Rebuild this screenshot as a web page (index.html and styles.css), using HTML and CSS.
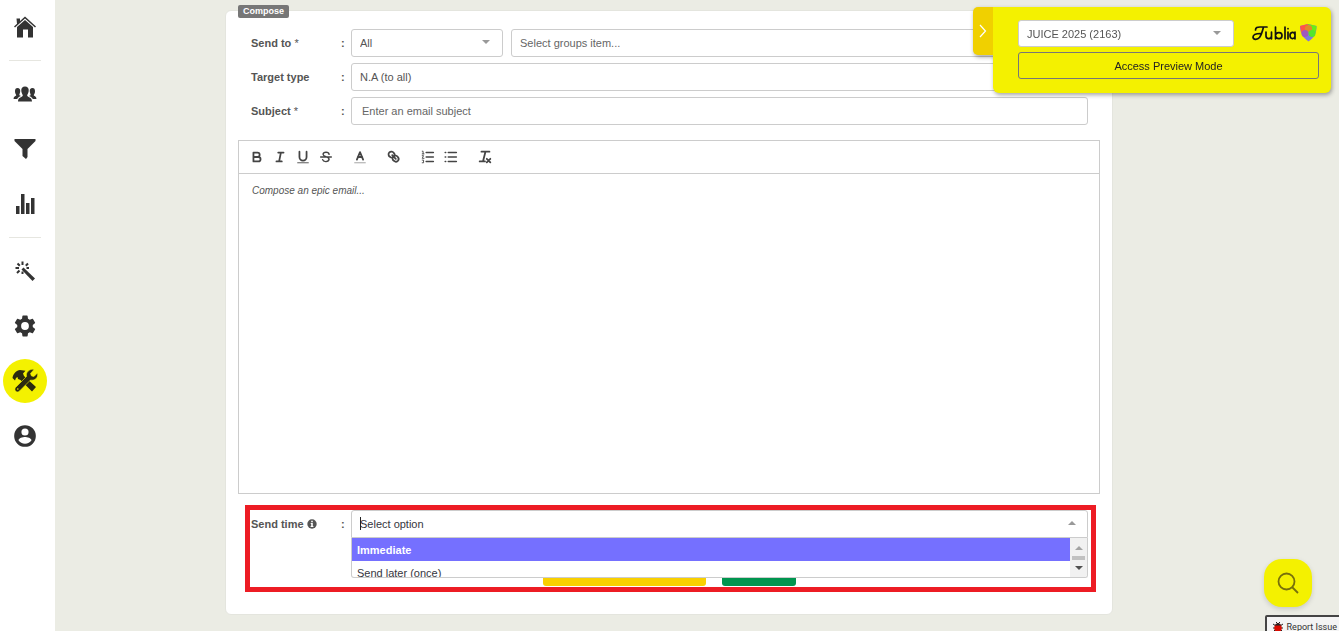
FILE: index.html
```html
<!DOCTYPE html>
<html lang="en">
<head>
<meta charset="utf-8">
<title>Compose email</title>
<link rel="stylesheet" href="styles.css">
</head>
<body>
<div class="app">
  <nav class="sidebar" aria-label="Main">
    <a class="nav-item" href="#home" aria-label="Home">
      <svg width="22" height="22" viewBox="0 0 22 22"><path d="M2.500 2.500H6V5L3 8ZM0 10.500 11 0.500 22 10.500 21 11.500 11 2.600 1 11.500Z"/><path d="M11 4 19 11V21.500H14V13.500H9V21.500H3V11Z"/></svg>
    </a>
    <hr class="nav-rule">
    <a class="nav-item" href="#people" aria-label="People">
      <svg width="24" height="16" viewBox="0 0 24 16"><path d="M4.500 2C6.500 2 7.500 3.400 7.200 5.600 7 7.500 6.200 8.200 6.400 9.200L8 10.100C6 11 5 11.500 4.200 13H0.600C0.600 11 1.200 10.600 3.200 9.500 3.400 8.500 2 7.500 2 5.400 1.900 3.200 2.900 2 4.500 2ZM19.500 2C17.500 2 16.500 3.400 16.800 5.600 17 7.500 17.800 8.200 17.600 9.200L16 10.100C18 11 19 11.500 19.800 13H23.400C23.400 11 22.800 10.600 20.800 9.500 20.600 8.500 22 7.500 22 5.400 22.100 3.200 21.100 2 19.500 2Z"/><path d="M12 .5C14.500 .5 16 2 15.700 5 15.500 7.200 14.200 8.500 14.200 9.600 14.200 11.500 19 11 19 15.500H5C5 11 9.800 11.500 9.800 9.600 9.800 8.500 8.500 7.200 8.300 5 8 2 9.500 .5 12 .5Z"/></svg>
    </a>
    <a class="nav-item" href="#filter" aria-label="Filter">
      <svg width="22" height="20" viewBox="0 0 22 20"><path d="M.5 0H21.500V2L13.500 10V18L12 20 8.500 17V10L.5 2Z"/></svg>
    </a>
    <a class="nav-item" href="#reports" aria-label="Reports">
      <svg width="20" height="20" viewBox="0 0 20 20"><path d="M1 12H4.500V20H1ZM6 0H9.500V20H6ZM11 9H14.500V20H11ZM16 4H19.500V20H16Z"/></svg>
    </a>
    <hr class="nav-rule">
    <a class="nav-item" href="#wizard" aria-label="Wizard">
      <svg width="20" height="20" viewBox="0 0 20 20"><path d="M8.500 6.500 20 17.500 17.500 20 6.500 8.500Z"/><path d="M7.500 .5V4M13 2.500 10.800 4.800M2.500 2.500 4.800 4.800M.5 7H4M2 12 4.500 9.500M7.500 10.500V13M11.500 7H14" fill="none" stroke="#333" stroke-width="2"/></svg>
    </a>
    <a class="nav-item" href="#settings" aria-label="Settings">
      <svg width="26" height="26" viewBox="0 0 24 24"><path d="M19.140 12.940c.04-.3.060-.610.060-.940s-.020-.640-.070-.940l2.030-1.580a.5.5 0 0 0 .12-.610l-1.920-3.320a.49.49 0 0 0-.59-.220l-2.390.96a7 7 0 0 0-1.620-.940l-.360-2.540a.48.48 0 0 0-.480-.410h-3.840a.47.47 0 0 0-.470.410l-.360 2.540c-.59.240-1.130.57-1.620.940l-2.390-.96a.48.48 0 0 0-.59.220L2.740 8.870a.47.47 0 0 0 .12.610l2.030 1.580a6 6 0 0 0 0 1.880l-2.030 1.580a.5.5 0 0 0-.12.610l1.920 3.320c.12.220.37.290.59.220l2.390-.96c.5.380 1.030.7 1.620.940l.36 2.540c.05.240.240.410.480.410h3.840c.240 0 .440-.170.470-.410l.360-2.540a7 7 0 0 0 1.620-.940l2.390.96c.220.080.470 0 .59-.220l1.920-3.320a.47.47 0 0 0-.12-.610ZM12 15.600a3.600 3.600 0 1 1 0-7.200 3.600 3.600 0 0 1 0 7.200Z"/></svg>
    </a>
    <a class="nav-item nav-item-active" href="#tools" aria-label="Tools">
      <svg width="26" height="24" viewBox="0 0 26 24"><path d="M.5 9C1 5 4.500 1 8 1L13.500 1.800 11 4.500 12 7 24 18 20 22.500 8.500 11 6 10 5.500 8 4 9 3 11.500Z"/><path d="M22 .5 18.500 4.500 19.500 7 22 7.500 25.500 4C26.500 9 22.500 12 18.500 11L7.500 22C5 24.500 1.500 21.500 3.500 18.500L14.500 7.500C13.500 3 18 -.5 22 .5Z" stroke="#f4f100" stroke-width=".6"/><circle cx="5.800" cy="20" r=".8" fill="#f4f100"/></svg>
    </a>
    <a class="nav-item" href="#account" aria-label="Account">
      <svg width="26" height="26" viewBox="0 0 24 24"><path d="M12 2a10 10 0 1 0 0 20 10 10 0 0 0 0-20Zm0 3a3.300 3.300 0 1 1 0 6.600A3.300 3.300 0 0 1 12 5Zm0 14.200a7.200 7.200 0 0 1-6-3.220c.03-1.990 4-3.080 6-3.080s5.970 1.090 6 3.080a7.200 7.200 0 0 1-6 3.220Z"/></svg>
    </a>
  </nav>

  <main class="main">
    <form class="card" aria-labelledby="card-title">
      <h1 class="card-title" id="card-title">Compose</h1>
      <div class="fields">
        <div class="row">
          <label class="label" for="send-to">Send to <span class="star">*</span></label>
          <span class="colon">:</span>
          <div class="select-wrap send-to">
            <select class="control" id="send-to"><option>All</option></select>
            <span class="arrow"></span>
          </div>
          <input class="control groups" type="text" aria-label="Groups" placeholder="Select groups item...">
        </div>
        <div class="row">
          <label class="label" for="target">Target type</label>
          <span class="colon">:</span>
          <input class="control" id="target" type="text" value="N.A (to all)" readonly>
        </div>
        <div class="row">
          <label class="label" for="subject">Subject <span class="star">*</span></label>
          <span class="colon">:</span>
          <input class="control subject" id="subject" type="text" placeholder="Enter an email subject">
        </div>
      </div>

      <div class="editor">
        <div class="toolbar" role="toolbar" aria-label="Formatting">
          <div class="tool-group">
            <button class="tool" type="button" aria-label="Bold"><svg viewBox="0 0 18 18"><path d="M5 4H9.500A2.500 2.500 0 0 1 9.500 9H5ZM5 9H10.500A2.500 2.500 0 0 1 10.500 14H5Z" stroke-width="2"/></svg></button>
            <button class="tool" type="button" aria-label="Italic"><svg viewBox="0 0 18 18"><path d="M7 4H13M5 14H11M8 14 10 4" stroke-width="2"/></svg></button>
            <button class="tool" type="button" aria-label="Underline"><svg viewBox="0 0 18 18"><path d="M5 3V9A4 4 0 0 0 13 9V3" stroke-width="2"/><path d="M3 15.500H15"/></svg></button>
            <button class="tool" type="button" aria-label="Strike"><svg viewBox="0 0 18 18"><path d="M3 9H15M12.500 6C12 3 6 3 5.700 6 5.500 8.500 12.500 8.500 12.500 11.500 12 15 6 15 5.200 12" stroke-width="1.600"/></svg></button>
          </div>
          <button class="tool" type="button" aria-label="Text colour"><svg viewBox="0 0 18 18"><path d="M5.500 12 9 3.500 12.500 12M6.500 9H11.500" stroke-width="2"/><path d="M3 15.500H15" stroke="#999"/></svg></button>
          <button class="tool" type="button" aria-label="Link"><svg viewBox="0 0 18 18"><path d="M7 7 11 11" stroke-width="2"/><path d="M8.900 4.600A3.200 3.200 0 1 0 4.600 8.900C5.800 10 7.500 9.900 8.800 8.800 10 7.500 10 5.800 8.900 4.600ZM13.400 9.100A3.200 3.200 0 1 0 9.100 13.400C10.300 14.500 12 14.500 13.300 13.300 14.500 12 14.500 10.300 13.400 9.100Z" stroke-width="2"/></svg></button>
          <div class="tool-group">
            <button class="tool" type="button" aria-label="Numbered list"><svg viewBox="0 0 18 18"><path d="M7 4H15M7 9H15M7 14H15" stroke-width="1.800"/><path d="M2.500 2.500H3.500V5.500M2.500 5.500H4.500M2.500 7.500H4L2.500 10.500H4.500M2.500 12.500H4V15.500H2.500" stroke-width="1"/></svg></button>
            <button class="tool" type="button" aria-label="Bullet list"><svg viewBox="0 0 18 18"><path d="M6 4H15M6 9H15M6 14H15M2.500 4H3M2.500 9H3M2.500 14H3" stroke-width="1.800"/></svg></button>
          </div>
          <button class="tool" type="button" aria-label="Clear formatting"><svg viewBox="0 0 18 18"><path d="M5 3H14M9.500 3 7 13M3 14H9" stroke-width="2"/><path d="M11 11 15 15M15 11 11 15" stroke-width="2"/></svg></button>
        </div>
        <textarea class="body-text" aria-label="Email body" placeholder="Compose an epic email..."></textarea>
      </div>

      <section class="schedule">
        <div class="row">
          <label class="label" for="send-time">Send time
            <svg class="info" viewBox="0 0 10 10"><circle cx="5" cy="5" r="4.700" fill="#555"/><path d="M4.200 1.800H5.800V3.200H4.200ZM3.700 4H5.800V7H6.400V8H3.600V7H4.200V5H3.700Z" fill="#fff"/></svg>
          </label>
          <span class="colon">:</span>
          <div class="combo">
            <input class="control combo-input" id="send-time" type="text" placeholder="Select option">
            <span class="caret"></span>
            <span class="arrow arrow-up"></span>
            <div class="menu">
              <div class="options" role="listbox" aria-label="Send time options">
                <button class="option option-active" type="button" role="option" aria-selected="true">Immediate</button>
                <button class="option" type="button" role="option" aria-selected="false">Send later (once)</button>
              </div>
              <div class="scrollbar"><span class="scroll-up"></span><span class="thumb"></span><span class="scroll-down"></span></div>
            </div>
          </div>
        </div>
        <div class="actions">
          <button class="action action-preview" type="button" aria-label="Preview"></button>
          <button class="action action-send" type="submit" aria-label="Send"></button>
        </div>
      </section>
    </form>
  </main>
</div>

<aside class="preview">
  <button class="preview-tab" type="button" aria-label="Collapse"><svg width="8" height="14" viewBox="0 0 8 14"><path d="M1 1 6.500 7 1 13" fill="none" stroke="#fff" stroke-width="1.200"/></svg></button>
  <div class="preview-panel">
    <div class="preview-top">
      <div class="select-wrap event">
        <select class="control" aria-label="Event"><option>JUICE 2025 (2163)</option></select>
        <span class="arrow"></span>
      </div>
      <svg class="logo" width="66" height="22" viewBox="0 0 66 22" role="img" aria-label="Jublia">
        <g fill="none" stroke="#111" stroke-width="1.700" stroke-linecap="round" stroke-linejoin="round">
          <path d="M3.500 7C3.500 4.500 5.500 4 8 4H15M11.500 4C10.500 8 9.500 12 7.500 14.500 5.500 17 1 17 1 14 1.200 11.500 4.500 10.500 8.500 10.500"/>
          <path d="M14 9V13C14 16.500 19.500 16.500 19.500 13V9M19.500 13V15.800"/>
          <path d="M23.500 4V15.800M23.500 12C24.500 8.500 30 9 30 12.500 30 16.500 24.500 16.700 23.500 13"/>
          <path d="M33 4V15.800M36 9V15.800M36 5.500V5.700M43 9V15.800M43 12C42.500 8 38 9 38 12.500 38.200 16.500 42.500 16.500 43 13"/>
        </g>
        <path d="M48 3 56 1 64.500 3C64.800 10 62 15 56.500 18.500 51 15 48 10 48 3Z" fill="#8b72df"/>
        <path d="M48 3 56 1V9L49.500 10Z" fill="#ff5648"/><path d="M56 1 64.500 3Q64.500 9 61 14L56 9Z" fill="#66ee16"/>
        <circle cx="56.500" cy="5.500" r="3.600" fill="#e18b2a"/><circle cx="53" cy="10.500" r="3.500" fill="#a058bd"/><circle cx="60" cy="10.500" r="3.500" fill="#53e52c"/><circle cx="56.500" cy="15" r="2.300" fill="#7680d8"/>
      </svg>
    </div>
    <button class="preview-button" type="button">Access Preview Mode</button>
  </div>
</aside>

<button class="search" type="button" aria-label="Search"><svg width="24" height="24" viewBox="0 0 24 24"><g fill="none" stroke="#77700b" stroke-width="1.800"><circle cx="10.500" cy="10.500" r="8"/><path d="M16 16 22 22"/></g></svg></button>
<button class="report" type="button"><svg width="10" height="12" viewBox="0 0 10 12"><path d="M0 3 3 5M10 3 7 5M0 7H10M0 11 3 8M10 11 7 8M3 1 5 3 7 1" stroke="#222" fill="none"/><ellipse cx="5" cy="7" rx="3.800" ry="4.500" fill="#d90b00"/><path d="M1.500 4.500Q5 0 8.500 4.500Z" fill="#222"/></svg>Report Issue</button>
</body>
</html>
```
FILE: styles.css
```css
* { box-sizing: border-box; }
body {
  margin: 0;
  background: #ebece4;
  color: #555;
  font: 11px/16px "Liberation Sans", Arial, sans-serif;
  overflow: hidden;
}
button, input, select, textarea { font: inherit; color: inherit; margin: 0; }
button { border: 0; padding: 0; background: none; cursor: pointer; }

.app { display: flex; min-height: 100vh; }

/* Sidebar */
.sidebar {
  flex: none;
  width: 55px;
  padding: 5px 8px 0 3px;
  background: #fff;
  display: flex;
  flex-direction: column;
  align-items: center;
  gap: 11px;
}
.nav-item {
  display: grid;
  place-items: center;
  width: 44px;
  height: 44px;
  border-radius: 50%;
  fill: #333;
}
.nav-item-active { background: #f4f100; fill: #2c2b10; }
.nav-rule { width: 32px; height: 1px; margin: 0; border: 0; background: #e6e6e0; }

/* Compose card */
.main { flex: 1; min-width: 0; padding: 10px 226px 16px 170px; }
.card {
  position: relative;
  height: 100%;
  padding: 18px 12px 22px;
  background: #fff;
  border: 1px solid #e4e5de;
  border-radius: 6px;
}
.card-title {
  position: absolute;
  top: -6px;
  left: 12px;
  margin: 0;
  padding: 0 5px;
  border-radius: 2px;
  background: #777;
  color: #fff;
  font-size: 9px;
  line-height: 13px;
}
.fields { display: flex; flex-direction: column; gap: 6px; padding: 0 12px 0 13px; }
.row { display: flex; align-items: center; }
.label { flex: none; width: 90px; font-weight: bold; white-space: nowrap; }
.star { font-weight: normal; }
.colon { flex: none; width: 10px; font-weight: bold; }
.control {
  flex: 1;
  min-width: 0;
  width: 100%;
  height: 28px;
  padding: 0 8px;
  border: 1px solid #ccc;
  border-radius: 3px;
  background: #fff;
  outline: 0;
  appearance: none;
}
.control::placeholder { color: #666; opacity: 1; }
.subject { padding: 0 10px; }
.select-wrap { position: relative; }
.send-to { flex: none; width: 152px; margin-right: 8px; }
.arrow {
  position: absolute;
  top: 11px;
  right: 13px;
  border: 4px solid transparent;
  border-top-color: #999;
  border-bottom: 0;
}
.arrow-up { right: 12px; border-top: 0; border-bottom: 4px solid #999; }

/* Editor */
.editor { margin-top: 15px; border: 1px solid #ccc; }
.toolbar {
  display: flex;
  align-items: center;
  gap: 18px;
  height: 33px;
  padding: 0 10px;
  border-bottom: 1px solid #ccc;
}
.tool-group { display: flex; gap: 7px; }
.tool { width: 16px; height: 16px; }
.tool svg { display: block; width: 16px; height: 16px; fill: none; stroke: #444; stroke-linecap: round; stroke-linejoin: round; }
.body-text {
  display: block;
  width: 100%;
  height: 319px;
  padding: 9px 13px;
  border: 0;
  outline: 0;
  resize: none;
}
.body-text::placeholder { color: #555; opacity: 1; font-size: 10px; font-style: italic; }

/* Send time, framed in red */
.schedule { position: relative; margin-top: 16px; padding: 0 12px 0 13px; }
.schedule::after {
  content: "";
  position: absolute;
  inset: -5px 4px -6px 7px;
  border: 5px solid #ed1c24;
  pointer-events: none;
}
.info { width: 10px; height: 10px; vertical-align: -1px; }
.combo { position: relative; flex: 1; }
.combo-input { display: block; border-radius: 3px 3px 0 0; }
.combo-input::placeholder { color: #35353d; }
.caret { position: absolute; left: 9px; top: 7px; width: 1px; height: 13px; background: #222; }
.menu {
  position: absolute;
  z-index: 1;
  top: 28px;
  left: 0;
  right: 0;
  display: flex;
  height: 40px;
  overflow: hidden;
  border: 1px solid #ccc;
  border-top-width: 0;
  border-radius: 0 0 3px 3px;
  background: #fff;
}
.options { flex: 1; }
.option { display: block; width: 100%; height: 23px; padding: 0 5px; text-align: left; color: #35353d; }
.option-active { background: #7570ff; color: #fff; font-weight: bold; }
.scrollbar {
  display: flex;
  flex-direction: column;
  align-items: center;
  gap: 6px;
  width: 17px;
  padding-top: 8px;
  background: #f1f1f1;
}
.scroll-up { border: 4px solid transparent; border-top: 0; border-bottom-color: #a3a3a3; }
.thumb { width: 13px; height: 4px; background: #c1c1c1; }
.scroll-down { border: 4px solid transparent; border-bottom: 0; border-top-color: #505050; }
.actions { display: flex; justify-content: center; gap: 16px; padding-top: 20px; }
.action { height: 28px; border-radius: 3px; }
.action-preview { width: 163px; background: #f9d000; }
.action-send { width: 74px; background: #00954f; }

/* Preview mode panel */
.preview {
  position: fixed;
  top: 7px;
  right: 8px;
  display: flex;
  align-items: flex-start;
  filter: drop-shadow(1px 2px 2px rgba(0, 0, 0, .35));
}
.preview-tab { display: grid; place-items: center; width: 20px; height: 48px; border-radius: 5px 0 0 5px; background: #f0d000; }
.preview-panel { width: 338px; padding: 13px 12px 14px 25px; border-radius: 0 6px 6px 6px; background: #f4f100; }
.preview-top { display: flex; align-items: center; justify-content: space-between; padding-right: 1px; }
.event { width: 216px; }
.event .control { display: block; height: 27px; }
.preview-button {
  display: block;
  width: 100%;
  height: 27px;
  margin-top: 5px;
  border: 1px solid #777;
  border-radius: 3px;
  color: #222;
}

/* Floating controls */
.search {
  position: fixed;
  right: 27px;
  bottom: 24px;
  display: grid;
  place-items: center;
  width: 48px;
  height: 48px;
  border-radius: 18px;
  background: #f4f100;
  box-shadow: 0 2px 5px rgba(0, 0, 0, .15);
}
.report {
  position: fixed;
  right: -8px;
  bottom: -8px;
  display: flex;
  align-items: center;
  gap: 4px;
  height: 24px;
  padding: 0 8px 0 6px;
  border: 2px solid #444;
  border-radius: 2px;
  background: #f4f4f4;
  color: #333;
  font: 9px/12px Roboto, sans-serif;
  white-space: nowrap;
}
```
